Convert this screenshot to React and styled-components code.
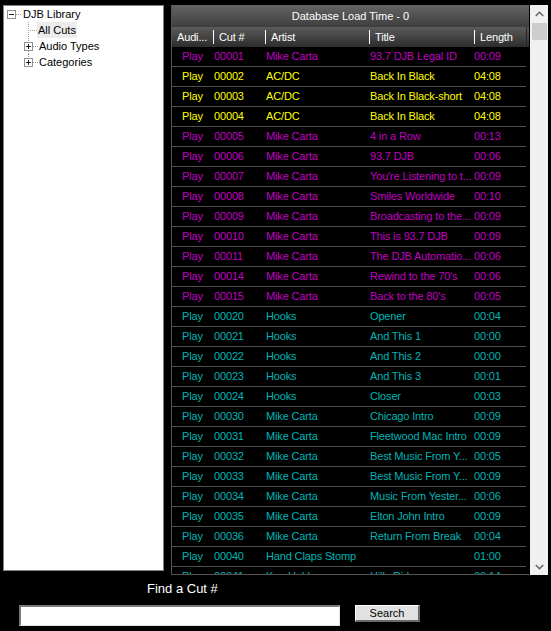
import React from "react";
import styled, { createGlobalStyle } from "styled-components";

const Global = createGlobalStyle`
  html, body { margin: 0; padding: 0; background: #000; }
  body { font-family: "Liberation Sans", Arial, sans-serif; overflow: hidden; }
`;

const MAG = "#c000c0";
const YEL = "#ffff00";
const TEAL = "#00b4b4";

const rows = [
  ["00001", "Mike Carta", "93.7 DJB Legal ID", "00:09", MAG],
  ["00002", "AC/DC", "Back In Black", "04:08", YEL],
  ["00003", "AC/DC", "Back In Black-short", "04:08", YEL],
  ["00004", "AC/DC", "Back In Black", "04:08", YEL],
  ["00005", "Mike Carta", "4 in a Row", "00:13", MAG],
  ["00006", "Mike Carta", "93.7 DJB", "00:06", MAG],
  ["00007", "Mike Carta", "You're Listening to t...", "00:09", MAG],
  ["00008", "Mike Carta", "Smiles Worldwide", "00:10", MAG],
  ["00009", "Mike Carta", "Broadcasting to the...", "00:09", MAG],
  ["00010", "Mike Carta", "This is 93.7 DJB", "00:09", MAG],
  ["00011", "Mike Carta", "The DJB Automatio...", "00:06", MAG],
  ["00014", "Mike Carta", "Rewind to the 70's", "00:06", MAG],
  ["00015", "Mike Carta", "Back to the 80's", "00:05", MAG],
  ["00020", "Hooks", "Opener", "00:04", TEAL],
  ["00021", "Hooks", "And This 1", "00:00", TEAL],
  ["00022", "Hooks", "And This 2", "00:00", TEAL],
  ["00023", "Hooks", "And This 3", "00:01", TEAL],
  ["00024", "Hooks", "Closer", "00:03", TEAL],
  ["00030", "Mike Carta", "Chicago Intro", "00:09", TEAL],
  ["00031", "Mike Carta", "Fleetwood Mac Intro", "00:09", TEAL],
  ["00032", "Mike Carta", "Best Music From Y...", "00:05", TEAL],
  ["00033", "Mike Carta", "Best Music From Y...", "00:09", TEAL],
  ["00034", "Mike Carta", "Music From Yester...", "00:06", TEAL],
  ["00035", "Mike Carta", "Elton John Intro", "00:09", TEAL],
  ["00036", "Mike Carta", "Return From Break", "00:04", TEAL],
  ["00040", "Hand Claps Stomp", null, "01:00", TEAL],
  ["00041", "Ken Holden", "Hills Ridge", "00:14", TEAL],
];

const Page = styled.div`
  width: 551px;
  height: 631px;
  background: #000;
  display: flex;
  flex-direction: column;
`;

const Main = styled.div`
  display: flex;
  align-items: flex-start;
  gap: 7px;
  padding: 5px 0 0 3px;
`;

const TreePanel = styled.div`
  width: 159px;
  height: 564px;
  background: #fff;
  border: 1px solid #828282;
  padding-top: 0;
  font-size: 11px;
  color: #000;
`;

const TreeRow = styled.div`
  display: flex;
  align-items: center;
  height: 16px;
  padding-left: ${(p) => p.$indent}px;
`;

const TreeLabel = styled.span`
  line-height: 16px;
  padding: 0 1px;
  margin-left: ${(p) => (p.$selected ? "-1px" : "0")};
  background: ${(p) => (p.$selected ? "#ececec" : "transparent")};
  white-space: nowrap;
`;

const Conn = styled.svg`
  flex: none;
  display: block;
  shape-rendering: crispEdges;
`;

function Connector({ box, expanded, top, bottom, vertical }) {
  const dot = { stroke: "#a0a0a0", strokeWidth: 1, strokeDasharray: "1 1" };
  return (
    <Conn width="18" height="16" viewBox="0 0 18 16">
      {vertical && top && <line x1={vertical} y1="0" x2={vertical} y2={box ? 4 : 8} style={dot} />}
      {vertical && bottom && <line x1={vertical} y1={box ? 13 : 8} x2={vertical} y2="16" style={dot} />}
      {box ? (
        <>
          <line x1={box + 9} y1="8.5" x2="18" y2="8.5" style={dot} />
          <rect x={box + 0.5} y="4.5" width="8" height="8" fill="#fff" stroke="#919191" />
          <line x1={box + 2} y1="8.5" x2={box + 7} y2="8.5" stroke="#1e1e1e" />
          {!expanded && <line x1={box + 4.5} y1="6" x2={box + 4.5} y2="11" stroke="#1e1e1e" />}
        </>
      ) : (
        <line x1={vertical + 1} y1="8.5" x2="18" y2="8.5" style={dot} />
      )}
    </Conn>
  );
}

const GridArea = styled.div`
  display: flex;
`;

const Table = styled.div`
  width: 357px;
  height: 569px;
  border-left: 1px solid #555;
  border-bottom: 1px solid #555;
  overflow: hidden;
  font-size: 11px;
  letter-spacing: -0.15px;
`;

const TitleBand = styled.div`
  height: 22px;
  display: flex;
  align-items: center;
  justify-content: center;
  color: #fff;
  background: linear-gradient(#646464, #3e3e3e);
  letter-spacing: 0;
`;

const cols = "41px 52px 104px 105px 52px";

const HeaderRow = styled.div`
  height: 20px;
  display: grid;
  grid-template-columns: ${cols} 1fr;
  background: linear-gradient(#5c5c5c, #2c2c2c);
  color: #fff;
`;

const HeaderCell = styled.div`
  display: flex;
  align-items: center;
  padding-left: ${(p) => (p.$first ? "5px" : "0")};
  white-space: nowrap;
  overflow: hidden;
`;

const HeadSep = styled.span`
  width: 1px;
  height: 14px;
  background: #fff;
  margin-right: 5px;
  flex: none;
`;

const HeadEnd = styled.div`
  border-left: 1px solid #262626;
`;

const Row = styled.div`
  display: grid;
  grid-template-columns: ${cols};
  width: 354px;
  height: 19px;
  border-bottom: 1px solid #4e4e4e;
  color: ${(p) => p.$color};
  line-height: 19px;
`;

const Cell = styled.div`
  padding-left: ${(p) => p.$pad ?? 1}px;
  text-align: ${(p) => (p.$center ? "center" : "left")};
  white-space: nowrap;
  overflow: hidden;
  grid-column: ${(p) => (p.$span ? `span ${p.$span}` : "auto")};
`;

const Scrollbar = styled.div`
  width: 18px;
  height: 570px;
  margin-left: 1px;
  background: #f0f0f0;
  display: flex;
  flex-direction: column;
`;

const ArrowBtn = styled.div`
  height: ${(p) => p.$h}px;
  display: flex;
  align-items: center;
  justify-content: center;
`;

const Thumb = styled.div`
  height: 17px;
  width: 15px;
  margin-left: 2px;
  background: #cdcdcd;
`;

const Spacer = styled.div`
  flex: 1;
`;

const Bottom = styled.div`
  padding-top: 6px;
  display: flex;
  flex-direction: column;
`;

const FindLabel = styled.div`
  padding-left: 147px;
  font-size: 13px;
  line-height: 15px;
  color: #fff;
`;

const SearchRow = styled.div`
  display: flex;
  align-items: flex-start;
  margin-top: 9px;
  padding-left: 19px;
  gap: 15px;
`;

const Input = styled.input`
  width: 321px;
  height: 21px;
  box-sizing: border-box;
  margin: 0;
  background: #fff;
  border-style: solid;
  border-width: 2px 1px 1px 2px;
  border-color: #7a7a7a #e3e3e3 #e3e3e3 #7a7a7a;
  outline: none;
`;

const Button = styled.button`
  width: 65px;
  height: 17px;
  box-sizing: border-box;
  margin: 0;
  padding: 0;
  background: #e1e1e1;
  border-style: solid;
  border-width: 1px 2px 2px 1px;
  border-color: #fff #6a6a6a #6a6a6a #fff;
  font-family: "Liberation Sans", Arial, sans-serif;
  font-size: 11px;
  color: #000;
  line-height: 13px;
`;

const Chevron = ({ up }) => (
  <svg width="9" height="6" viewBox="0 0 9 6">
    <polyline
      points={up ? "0.8,5 4.5,1.3 8.2,5" : "0.8,1 4.5,4.7 8.2,1"}
      fill="none"
      stroke="#606060"
      strokeWidth="1.4"
    />
  </svg>
);

export default function App() {
  return (
    <Page>
      <Global />
      <Main>
        <TreePanel>
          <TreeRow $indent={0}>
            <Connector box={3} expanded />
            <TreeLabel>DJB Library</TreeLabel>
          </TreeRow>
          <TreeRow $indent={16}>
            <Connector vertical={8.5} top bottom />
            <TreeLabel $selected>All Cuts</TreeLabel>
          </TreeRow>
          <TreeRow $indent={16}>
            <Connector vertical={8.5} box={4} top bottom />
            <TreeLabel>Audio Types</TreeLabel>
          </TreeRow>
          <TreeRow $indent={16}>
            <Connector vertical={8.5} box={4} top />
            <TreeLabel>Categories</TreeLabel>
          </TreeRow>
        </TreePanel>
        <GridArea>
          <Table>
            <TitleBand>Database Load Time - 0</TitleBand>
            <HeaderRow>
              <HeaderCell $first>Audi...</HeaderCell>
              <HeaderCell><HeadSep />Cut #</HeaderCell>
              <HeaderCell><HeadSep />Artist</HeaderCell>
              <HeaderCell><HeadSep />Title</HeaderCell>
              <HeaderCell><HeadSep />Length</HeaderCell>
              <HeadEnd />
            </HeaderRow>
            {rows.map(([cut, artist, title, len, color], i) => (
              <Row key={i} $color={color}>
                <Cell $center $pad={0}>Play</Cell>
                <Cell>{cut}</Cell>
                {title === null ? (
                  <Cell $span={2}>{artist}</Cell>
                ) : (
                  <>
                    <Cell>{artist}</Cell>
                    <Cell>{title}</Cell>
                  </>
                )}
                <Cell $pad={0}>{len}</Cell>
              </Row>
            ))}
          </Table>
          <Scrollbar>
            <ArrowBtn $h={18}><Chevron up /></ArrowBtn>
            <Thumb />
            <Spacer />
            <ArrowBtn $h={17}><Chevron /></ArrowBtn>
          </Scrollbar>
        </GridArea>
      </Main>
      <Bottom>
        <FindLabel>Find a Cut #</FindLabel>
        <SearchRow>
          <Input type="text" />
          <Button>Search</Button>
        </SearchRow>
      </Bottom>
    </Page>
  );
}
